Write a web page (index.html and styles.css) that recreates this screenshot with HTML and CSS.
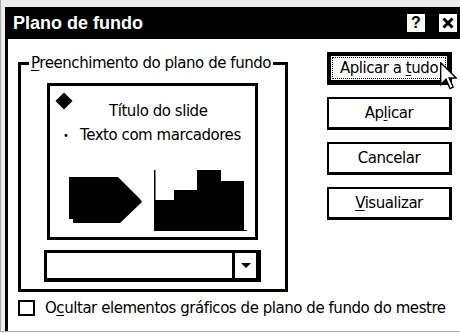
FILE: index.html
```html
<!DOCTYPE html>
<html lang="pt">
<head>
<meta charset="utf-8">
<link rel="stylesheet" href="styles.css">
</head>
<body>
<div class="screen">
  <div class="window">
    <div class="titlebar">
      <span class="title">Plano de fundo</span>
      <div class="tb-btns">
        <span class="tb-btn">?</span>
        <span class="tb-btn tb-close">
          <svg width="12" height="12" viewBox="0 0 12 12"><path d="M1.5 1.5 L10.5 10.5 M10.5 1.5 L1.5 10.5" stroke="#000" stroke-width="3" fill="none"/></svg>
        </span>
      </div>
    </div>
    <div class="body">
      <div class="group">
        <div class="group-label"><u>P</u>reenchimento do plano de fundo</div>
        <div class="preview">
          <div class="pv-title-row">
            <span class="diamond"></span>
            <span class="pv-title">Título do slide</span>
          </div>
          <div class="pv-bullet-row">
            <span class="pv-bullet">•</span>
            <span class="pv-text">Texto com marcadores</span>
          </div>
          <div class="pv-shapes">
            <svg class="pentagon" width="74" height="47" viewBox="0 0 74 47"><polygon points="0,0 49,0 71,22 73,25 51,46 4,46 4,42 0,42" fill="#000"/></svg>
            <svg class="chart" width="94" height="62" viewBox="0 0 94 62">
              <rect x="0" y="0" width="1.5" height="61" fill="#000"/>
              <polygon points="0,30 20,30 20,20 43,20 43,0 67,0 67,11 90,11 90,61 0,61" fill="#000"/>
              <rect x="0" y="60" width="93" height="1" fill="#000"/>
            </svg>
          </div>
        </div>
        <div class="combo">
          <div class="combo-field"></div>
          <div class="combo-btn"><span class="tri"></span></div>
        </div>
      </div>
      <div class="buttons">
        <div class="btn btn-default"><span class="focus"><span>Aplicar a <u>t</u>udo</span></span>
          <svg class="cursor" width="17" height="28" viewBox="0 0 17 28"><path d="M0.7 0.7 L0.7 22.5 L6 17.3 L10 26.6 L13.2 25.2 L9.2 16 L16.2 16 Z" fill="#fff" stroke="#000" stroke-width="1.4" stroke-linejoin="miter"/></svg>
        </div>
        <div class="btn"><span>Ap<u>l</u>icar</span></div>
        <div class="btn"><span>Cancelar</span></div>
        <div class="btn"><span><u>V</u>isualizar</span></div>
      </div>
      <div class="check">
        <span class="box"></span>
        <span class="check-label">O<u>c</u>ultar elementos gráficos de plano de fundo do mestre</span>
      </div>
    </div>
  </div>
</div>
</body>
</html>
```
FILE: styles.css
```css
* { box-sizing: border-box; }
html, body { margin: 0; padding: 0; }
body {
  width: 460px;
  height: 333px;
  overflow: hidden;
  background: #fff;
  font-family: "DejaVu Sans", "Liberation Sans", sans-serif;
  font-size: 15px;
  letter-spacing: -0.45px;
  color: #000;
}
u { text-decoration: underline; text-underline-offset: 2px; text-decoration-thickness: 1px; }

.screen {
  width: 460px;
  height: 332px;
  background: #ececec;
  border-left: 1px solid #a8a8a8;
  border-bottom: 1px solid #a8a8a8;
  padding: 7px 0 0 4px;
}
.window {
  height: 100%;
  background: #fff;
  border-left: 3px solid #000;
}
.titlebar {
  height: 32px;
  background: #000;
  display: flex;
  align-items: center;
  justify-content: space-between;
  padding: 0 3px 0 5px;
}
.title {
  color: #fff;
  font-family: "Liberation Sans", "DejaVu Sans", sans-serif;
  font-weight: bold;
  font-size: 18px;
  letter-spacing: 0;
}
.tb-btns { display: flex; gap: 14px; }
.tb-btn {
  width: 18px;
  height: 18px;
  background: #fff;
  color: #000;
  font-family: "Liberation Sans", sans-serif;
  font-weight: bold;
  font-size: 16px;
  letter-spacing: 0;
  line-height: 18px;
  text-align: center;
  display: flex;
  align-items: center;
  justify-content: center;
}

.body {
  display: grid;
  grid-template-columns: 270px 125px;
  column-gap: 39px;
  padding-left: 10px;
}
.group {
  margin-top: 23px;
  width: 270px;
  height: 230px;
  border: 3px solid #000;
}
.group-label {
  width: max-content;
  margin: -11px 0 0 8px;
  padding: 0 2px;
  background: #fff;
  line-height: 18px;
}
.preview {
  margin: 11px 0 0 26px;
  width: 211px;
  height: 157px;
  border: 3px solid #000;
}
.pv-title-row {
  display: flex;
  align-items: flex-start;
  padding: 6px 0 0 5px;
  height: 34px;
}
.diamond {
  width: 12px;
  height: 12px;
  background: #000;
  transform: rotate(45deg);
  margin: 3px 0 0 3px;
}
.pv-title { margin: 10px 0 0 39px; line-height: 18px; }
.pv-bullet-row {
  display: flex;
  align-items: center;
  padding-left: 13px;
  height: 30px;
}
.pv-bullet { font-size: 10px; width: 17px; }
.pv-shapes {
  display: flex;
  align-items: flex-end;
  padding: 0 0 4px 19px;
  height: 86px;
}
.pentagon { margin-bottom: 8px; }
.chart { margin-left: 11px; }

.combo {
  margin: 10px 0 0 23px;
  width: 217px;
  height: 32px;
  display: flex;
  border-style: solid;
  border-color: #000;
  border-width: 3px 5px 4px 3px;
}
.combo-field { flex: 1; background: #fff; }
.combo-btn {
  width: 24px;
  border-left: 3px solid #000;
  background: #fff;
  display: flex;
  align-items: center;
  justify-content: center;
}
.tri {
  width: 0; height: 0;
  border-left: 5px solid transparent;
  border-right: 5px solid transparent;
  border-top: 5px solid #000;
}

.buttons {
  margin-top: 13px;
  display: flex;
  flex-direction: column;
  gap: 12px;
}
.btn {
  height: 33px;
  border-style: solid;
  border-color: #000;
  border-width: 2px 3px 3px 2px;
  display: flex;
  align-items: center;
  justify-content: center;
  position: relative;
}
.btn-default {
  border-width: 4px 5px 5px 4px;
  padding: 1px;
}
.focus {
  flex: 1;
  align-self: stretch;
  border: 1px dotted #000;
  display: flex;
  align-items: center;
  justify-content: center;
}
.cursor {
  position: absolute;
  left: 109px;
  top: 6px;
}

.check {
  grid-column: 1 / 3;
  margin-top: 7px;
  display: flex;
  align-items: center;
  gap: 10px;
}
.box {
  width: 17px;
  height: 16px;
  border: 2px solid #000;
  flex: none;
}
.check-label { white-space: nowrap; }
```
